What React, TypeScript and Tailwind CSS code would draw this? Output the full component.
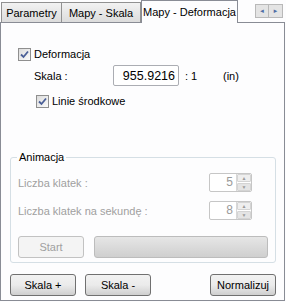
import React from "react";

const Check = ({ disabled = false }: { disabled?: boolean }) => (
  <span className="inline-flex h-[13px] w-[13px] shrink-0 items-center justify-center border border-[#8f8f8f] bg-gradient-to-br from-[#dcdcdc] to-[#fbfbfb]">
    <svg width="9" height="9" viewBox="0 0 9 9">
      <path
        d="M1 4.5 L3.5 7 L8 1.5"
        fill="none"
        stroke={disabled ? "#a0a0a0" : "#4a5f97"}
        strokeWidth="1.8"
      />
    </svg>
  </span>
);

const Spinner = ({ value }: { value: number }) => (
  <div className="flex h-[19px] w-[43px] rounded-[2px] border border-[#c6c6c6] bg-white">
    <span className="flex-1 pr-[3px] text-right text-[12px] leading-[17px] text-[#9a9a9a]">{value}</span>
    <div className="flex w-[15px] flex-col gap-px border-l border-[#d8d8d8] bg-white">
      <span className="flex flex-1 items-center justify-center rounded-[1px] border border-[#d4d4d4] bg-[#eeeeee] text-[5px] leading-none text-[#9c9c9c]">▲</span>
      <span className="flex flex-1 items-center justify-center rounded-[1px] border border-[#d4d4d4] bg-[#e4e4e4] text-[5px] leading-none text-[#9c9c9c]">▼</span>
    </div>
  </div>
);

const Btn = ({ label, disabled = false }: { label: string; disabled?: boolean }) => (
  <button
    className={`h-[22px] w-[66px] rounded-[3px] border leading-none ${
      disabled
        ? "border-[#c2c2c2] bg-[#f4f4f4] text-[#a0a0a0]"
        : "border-[#707070] bg-gradient-to-b from-[#f2f2f2] via-[#ebebeb] to-[#cfcfcf] text-black"
    }`}
  >
    {label}
  </button>
);

export default function App() {
  return (
    <div className="h-[302px] w-[286px] overflow-hidden whitespace-nowrap bg-[#fdfdfe] text-[11px] leading-[14px] text-black [font-family:'Liberation_Sans',Arial,sans-serif]">
      {/* tab strip */}
      <div className="flex h-[22px] items-end pl-[1px]">
        <div className="flex h-[20px] w-[61px] items-center justify-center border border-b-0 border-[#919191] bg-gradient-to-b from-[#f2f2f2] to-[#dcdcdc]">
          Parametry
        </div>
        <div className="flex h-[20px] w-[79px] items-center justify-center border border-b-0 border-l-0 border-[#919191] bg-gradient-to-b from-[#f2f2f2] to-[#dcdcdc]">
          Mapy - Skala
        </div>
        <div className="relative z-10 -mb-px flex h-[23px] w-[97px] items-start justify-center border border-b-0 border-[#898c95] bg-[#fdfdfe] pt-[4px]">
          Mapy - Deformacja
        </div>
        <div className="mb-[4px] ml-auto mr-[3px] flex h-[14px]">
          <span className="flex w-[14px] items-center justify-center border border-[#b9b9b9] bg-[#e4e4e4] text-[6px] text-[#4e6ea6]">◄</span>
          <span className="flex w-[14px] items-center justify-center border border-l-0 border-[#b9b9b9] bg-[#e4e4e4] text-[6px] text-[#4e6ea6]">►</span>
        </div>
      </div>

      {/* panel */}
      <div className="h-[279px] w-[285px] border border-[#898c95] pl-[9px] pr-[8px]">
        <div className="mt-[24px] flex items-center gap-[3px] pl-[8px]">
          <Check />
          <span>Deformacja</span>
        </div>
        <div className="mt-[4px] flex h-[21px] items-center pl-[24px]">
          <span className="w-[79px]">Skala :</span>
          <div className="flex h-[21px] w-[66px] items-center justify-end rounded-[2px] border border-[#abadb3] bg-white pr-[3px] text-[12.5px]">
            955.9216
          </div>
          <span className="ml-[6px] w-[38px]">: 1</span>
          <span>(in)</span>
        </div>
        <div className="mt-[8px] flex items-center gap-[3px] pl-[26px]">
          <Check />
          <span>Linie środkowe</span>
        </div>

        {/* group box */}
        <div className="relative mt-[49px] h-[106px] rounded-[3px] border border-[#d5dfe5] px-[7px] pt-[15px]">
          <span className="absolute -top-[8px] left-[6px] bg-[#fdfdfe] px-[2px]">Animacja</span>
          <div className="flex h-[19px] items-center justify-between pr-[16px] text-[#a0a0a0]">
            <span>Liczba klatek :</span>
            <Spinner value={5} />
          </div>
          <div className="mt-[9px] flex h-[19px] items-center justify-between pr-[16px] text-[#a0a0a0]">
            <span>Liczba klatek na sekundę :</span>
            <Spinner value={8} />
          </div>
          <div className="mt-[16px] flex items-center gap-[10px]">
            <Btn label="Start" disabled />
            <div className="h-[22px] flex-1 rounded-[3px] border border-[#bcbcbc] bg-gradient-to-b from-[#e6e6e6] to-[#cfcfcf]" />
          </div>
        </div>

        <div className="mt-[11px] flex items-center gap-[9px]">
          <Btn label="Skala +" />
          <Btn label="Skala -" />
          <div className="ml-auto">
            <Btn label="Normalizuj" />
          </div>
        </div>
      </div>
    </div>
  );
}
